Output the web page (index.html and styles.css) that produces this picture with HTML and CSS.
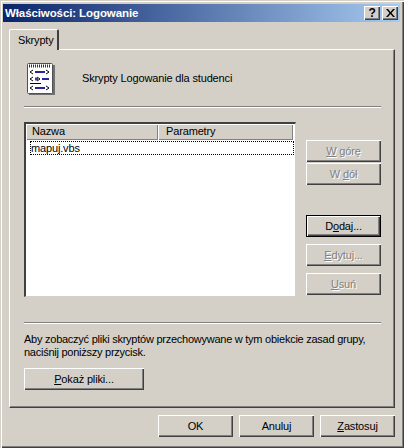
FILE: index.html
```html
<!DOCTYPE html>
<html lang="pl">
<head>
<meta charset="utf-8">
<title>Właściwości: Logowanie</title>
<link rel="stylesheet" href="styles.css">
</head>
<body>
<div class="window">
  <div class="titlebar">
    <span class="title">Właściwości: Logowanie</span>
    <div class="caption-buttons">
      <span class="caption-btn help">?</span>
      <span class="caption-btn close">
        <svg width="9" height="8" viewBox="0 0 9 8"><path d="M0 0h2l2.500 3 2.500-3h2L5.500 4 9 8H7L4.500 5 2 8H0l3.500-4z" fill="#000"/></svg>
      </span>
    </div>
  </div>
  <div class="tabs"><div class="tab">Skrypty</div></div>
  <div class="panel">
    <div class="header">
      <svg class="script-icon" width="28" height="32" viewBox="0 0 28 32">
        <rect x="2" y="2" width="26" height="30" fill="#707070"/>
        <rect x="0.500" y="0.500" width="25" height="30" rx="1" fill="#fff" stroke="#505050"/>
        <path d="M2 3h22" stroke="#333" stroke-width="3" stroke-dasharray="1 1"/>
        <g fill="none" stroke="#000" stroke-width="1">
          <path d="M6 7l-3 2 3 2M19 7l3 2-3 2M6 14l-3 2 3 2M10 14l3 2-3 2M6 23l-3 2 3 2M19 23l3 2-3 2"/>
          <path d="M3 20.500h11"/>
        </g>
        <g stroke="#26269c" stroke-width="2">
          <path d="M8 9h10M15 16h7M8 25h10"/>
        </g>
        <rect x="8" y="14.500" width="3" height="3" fill="#3a3ab8"/>
      </svg>
      <span class="header-text">Skrypty Logowanie dla studenci</span>
    </div>
    <hr class="sep sep-top">
    <div class="list-area">
      <div class="list">
        <div class="list-head">
          <div class="col col-name">Nazwa</div>
          <div class="col col-params">Parametry</div>
        </div>
        <div class="row">mapuj.vbs</div>
      </div>
      <div class="side-buttons">
        <div class="group group-move">
          <button class="btn disabled"><span><u>W</u> górę</span></button>
          <button class="btn disabled"><span>W <u>d</u>ół</span></button>
        </div>
        <div class="group group-edit">
          <button class="btn default"><span>D<u>o</u>daj...</span></button>
          <button class="btn disabled"><span><u>E</u>dytuj...</span></button>
          <button class="btn disabled"><span><u>U</u>suń</span></button>
        </div>
      </div>
    </div>
    <hr class="sep sep-bottom">
    <p class="note">Aby zobaczyć pliki skryptów przechowywane w tym obiekcie zasad grupy,<br>naciśnij poniższy przycisk.</p>
    <button class="btn show-files"><span><u>P</u>okaż pliki...</span></button>
  </div>
  <div class="footer">
    <button class="btn"><span>OK</span></button>
    <button class="btn"><span>Anuluj</span></button>
    <button class="btn"><span><u>Z</u>astosuj</span></button>
  </div>
</div>
</body>
</html>
```
FILE: styles.css
```css
* { box-sizing: border-box; }
html, body { margin: 0; padding: 0; }
body {
  width: 404px;
  height: 448px;
  overflow: hidden;
  background: #d4d0c8;
  font-family: "Liberation Sans", Arial, sans-serif;
  font-size: 11px;
  letter-spacing: -0.15px;
  color: #000;
}
.window {
  width: 404px;
  height: 448px;
  padding: 4px 4px 0 3px;
  background: #d4d0c8;
  box-shadow: inset 1px 1px 0 #d4d0c8, inset 2px 2px 0 #fff, inset -1px -1px 0 #404040, inset -2px -2px 0 #808080;
}
.titlebar {
  height: 18px;
  display: flex;
  align-items: center;
  justify-content: space-between;
  padding: 0 2px 0 2px;
  background: linear-gradient(to right, #0a246a, #a6caf0);
}
.title { color: #fff; font-weight: bold; font-size: 11.500px; letter-spacing: -0.1px; }
.caption-buttons { display: flex; gap: 2px; }
.caption-btn {
  width: 16px;
  height: 14px;
  display: flex;
  align-items: center;
  justify-content: center;
  background: #d4d0c8;
  font-weight: bold;
  font-size: 12px;
  box-shadow: inset 1px 1px 0 #fff, inset -1px -1px 0 #404040, inset -2px -2px 0 #808080;
}
.tabs { display: flex; margin: 7px 0 0 6px; height: 21px; position: relative; z-index: 1; }
.tab {
  width: 50px;
  height: 21px;
  padding: 4px 0 0 8px;
  background: #d4d0c8;
  border-top: 1px solid #fff;
  border-left: 1px solid #fff;
  border-right: 2px solid #404040;
  border-radius: 2px 2px 0 0;
}
.panel {
  width: 386px;
  height: 359px;
  margin: -1px 0 0 6px;
  padding: 0 13px 0 14px;
  border-top: 1px solid #fff;
  border-left: 1px solid #fff;
  border-right: 1px solid #404040;
  border-bottom: 1px solid #404040;
  box-shadow: inset -1px -1px 0 #808080;
}
.header { display: flex; align-items: center; height: 56px; padding: 0 0 0 3px; }
.script-icon { flex: none; margin-top: 1px; }
.header-text { margin-left: 27px; }
.sep {
  margin: 0;
  height: 2px;
  border: 0;
  border-top: 1px solid #808080;
  border-bottom: 1px solid #fff;
}
.list-area { display: flex; justify-content: space-between; margin-top: 14px; }
.list {
  width: 272px;
  height: 175px;
  background: #fff;
  border-top: 2px solid #404040;
  border-left: 2px solid #404040;
  border-right: 1px solid #d4d0c8;
  border-bottom: 1px solid #d4d0c8;
}
.list-head { display: flex; height: 16px; }
.col {
  background: #d4d0c8;
  padding: 1px 0 0 6px;
  box-shadow: inset 1px 1px 0 #fff, inset -1px -1px 0 #808080;
}
.col-name { width: 132px; }
.col-params { width: 135px; padding-left: 8px; }
.row {
  height: 14px;
  width: 264px;
  margin: 1px 0 0 4px;
  line-height: 12px;
  border: 1px dotted #000;
}
.side-buttons { width: 75px; padding-top: 18px; }
.group { display: flex; flex-direction: column; }
.group-move { gap: 1px; }
.group-edit { margin-top: 30px; gap: 7px; }
.btn {
  display: flex;
  align-items: center;
  justify-content: center;
  width: 75px;
  height: 22px;
  padding: 0;
  border: 0;
  background: #d4d0c8;
  font: inherit;
  letter-spacing: inherit;
  color: #000;
  box-shadow: inset 1px 1px 0 #fff, inset -1px -1px 0 #404040, inset -2px -2px 0 #808080;
}
.btn.default {
  box-shadow: inset 0 0 0 1px #000, inset 2px 2px 0 #fff, inset -2px -2px 0 #404040, inset -3px -3px 0 #808080;
}
.btn.disabled { color: #808080; text-shadow: 1px 1px 0 #fff; }
.sep-bottom { margin-top: 25px; }
.note { margin: 9px 0 0; line-height: 13px; white-space: nowrap; letter-spacing: -0.25px; }
.show-files { width: 120px; margin-top: 9px; }
.footer { display: flex; justify-content: flex-end; gap: 6px; margin: 7px 5px 0 0; }
```
